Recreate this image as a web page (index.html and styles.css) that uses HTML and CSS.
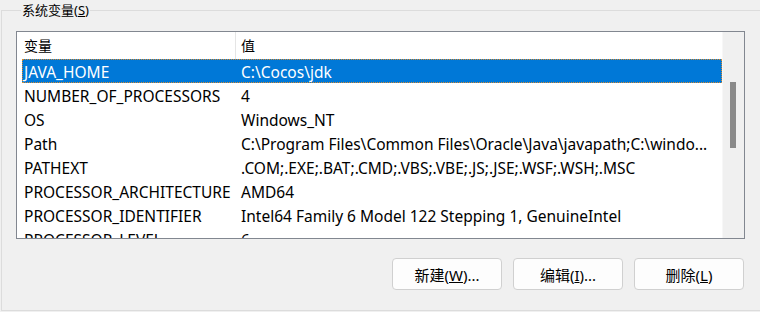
FILE: index.html
```html
<!DOCTYPE html>
<html lang="zh-CN">
<head>
    <meta charset="UTF-8">
    <title>系统变量</title>
    <link rel="stylesheet" href="styles.css">
</head>
<body>
    <fieldset class="group">
        <legend>系统变量(<u>S</u>)</legend>
        <div class="list">
            <div class="list-body">
                <div class="list-header">
                    <div class="hcell name">变量</div>
                    <div class="hcell value">值</div>
                </div>
                <div class="row selected"><span>JAVA_HOME</span><span>C:\Cocos\jdk</span></div>
                <div class="row"><span>NUMBER_OF_PROCESSORS</span><span>4</span></div>
                <div class="row"><span>OS</span><span>Windows_NT</span></div>
                <div class="row"><span>Path</span><span>C:\Program Files\Common Files\Oracle\Java\javapath;C:\windo...</span></div>
                <div class="row"><span>PATHEXT</span><span>.COM;.EXE;.BAT;.CMD;.VBS;.VBE;.JS;.JSE;.WSF;.WSH;.MSC</span></div>
                <div class="row"><span>PROCESSOR_ARCHITECTURE</span><span>AMD64</span></div>
                <div class="row"><span>PROCESSOR_IDENTIFIER</span><span>Intel64 Family 6 Model 122 Stepping 1, GenuineIntel</span></div>
                <div class="row"><span>PROCESSOR_LEVEL</span><span>6</span></div>
            </div>
            <div class="scrollbar">
                <div class="thumb"></div>
            </div>
        </div>
        <div class="buttons">
            <button>新建(<u>W</u>)...</button>
            <button>编辑(<u>I</u>)...</button>
            <button>删除(<u>L</u>)</button>
        </div>
    </fieldset>
</body>
</html>
```

FILE: styles.css
```css
body {
    margin: 0;
    background-color: #f0f0f0;
    font-family: "Noto Sans", "Noto Sans CJK SC", sans-serif;
    font-size: 15.5px;
    color: #000;
    overflow: hidden;
    height: 312px;
}
.group {
    box-sizing: border-box;
    height: 311px;
    margin: 0 -20px 0 1px;
    border: 1px solid #dcdcdc;
    padding: 11px 0 0 14px;
}
.group legend {
    margin-left: 5px;
    padding: 0 1px;
    line-height: 20px;
    font-family: "Noto Sans", "Noto Sans CJK SC", sans-serif;
    font-size: 13px;
}
.list {
    width: 727px;
    height: 206px;
    border: 1px solid #828790;
    background-color: #ffffff;
    display: flex;
    overflow: hidden;
}
.list-body {
    flex-grow: 1;
    overflow: hidden;
}
.list-header {
    display: flex;
    height: 27px;
    align-items: stretch;
}
.hcell {
    line-height: 26px;
    font-family: "Noto Sans CJK SC", sans-serif;
    font-size: 14px;
}
.hcell.name {
    width: 211px;
    padding-left: 7px;
    border-right: 1px solid #e5e5e5;
}
.hcell.value {
    padding-left: 5px;
}
.row {
    display: flex;
    height: 24px;
    line-height: 27px;
    margin-left: 5px;
    white-space: nowrap;
}
.row span:first-child {
    width: 217px;
    padding-left: 2px;
    box-sizing: border-box;
}
.row span:last-child {
    padding-left: 2px;
}
.row.selected {
    background-color: #0078d7;
    color: #ffffff;
    outline: 1px dotted #d88a30;
    outline-offset: -1px;
}
.scrollbar {
    width: 21px;
    border-left: 1px solid #f7f7f7;
    background-color: #f0f0f0;
    position: relative;
}
.thumb {
    position: absolute;
    left: 7px;
    top: 50px;
    width: 6px;
    height: 66px;
    background-color: #8a8a8a;
}
.buttons {
    display: flex;
    justify-content: flex-end;
    gap: 11px;
    margin-top: 19px;
    width: 728px;
}
button {
    width: 110px;
    height: 32px;
    background-color: #fdfdfd;
    border: 1px solid #d0d0d0;
    border-radius: 4px;
    font-family: "Noto Sans", "Noto Sans CJK SC", sans-serif;
    font-size: 15px;
    color: #000;
    padding: 0;
}
```
